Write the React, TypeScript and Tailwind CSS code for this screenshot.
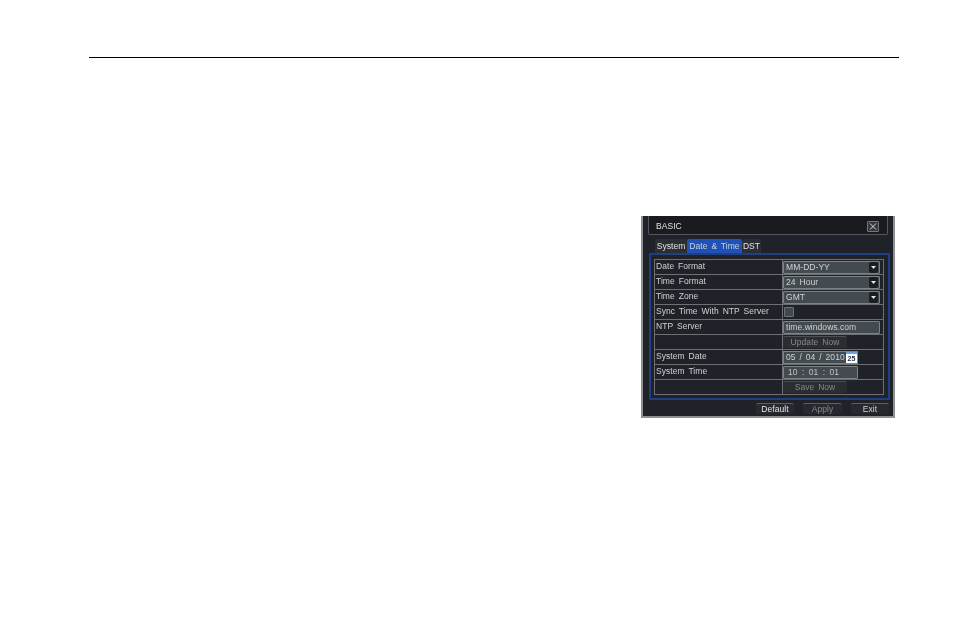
const rows = [
  { label: "Date Format", kind: "select", value: "MM-DD-YY" },
  { label: "Time Format", kind: "select", value: "24 Hour" },
  { label: "Time Zone", kind: "select", value: "GMT" },
  { label: "Sync Time With NTP Server", kind: "check", value: "" },
  { label: "NTP Server", kind: "input", value: "time.windows.com" },
  { label: "", kind: "button", value: "Update Now" },
  { label: "System Date", kind: "date", value: "05 / 04 / 2010" },
  { label: "System Time", kind: "time", value: "10 : 01 : 01" },
  { label: "", kind: "button", value: "Save Now" },
];

function Field({ kind, value }: { kind: string; value: string }) {
  if (kind === "select") {
    return (
      <div className="flex h-[13px] w-[97px] items-center justify-between rounded-[1px] border border-[#7c8286] bg-[#434b50] pl-[2px] pr-px text-[#cfd2d2]">
        <span>{value}</span>
        <span className="flex h-[11px] w-[9px] items-center justify-center rounded-[2px] bg-[#1b1d21]">
          <svg width="5" height="3" viewBox="0 0 5 3">
            <path d="M0 0h5L2.5 3z" fill="#e8e8e8" />
          </svg>
        </span>
      </div>
    );
  }
  if (kind === "check") {
    return <div className="ml-[1px] h-[10px] w-[10px] rounded-[1px] border border-[#6d7376] bg-[#41474c]" />;
  }
  if (kind === "input") {
    return (
      <div className="flex h-[13px] w-[97px] items-center rounded-[1px] border border-[#7c8286] bg-[#434b50] pl-[2px] text-[#cfd2d2]">
        {value}
      </div>
    );
  }
  if (kind === "button") {
    return (
      <div className="flex h-[12px] w-[64px] items-center justify-center rounded-[2px] border-t border-[#4c5054] bg-[#2a2d31] text-[#85898b]">
        {value}
      </div>
    );
  }
  if (kind === "date") {
    return (
      <div className="flex h-[13px] w-[75px] items-center justify-between whitespace-nowrap border border-[#7c8286] bg-[#434b50] pl-[2px] text-[#cfd2d2]">
        <span>{value}</span>
        <span className="flex h-[11px] w-[11px] flex-col bg-white">
          <span className="h-[2px] bg-[#6aa2e0]" />
          <span className="text-center text-[7px] font-bold leading-[9px] tracking-normal text-[#1c2a48]">25</span>
        </span>
      </div>
    );
  }
  return (
    <div className="flex h-[13px] w-[75px] items-center rounded-[1px] border border-[#7c8286] bg-[#434b50] pl-[4px] text-[#c0c3c3] [word-spacing:2px]">
      {value}
    </div>
  );
}

function FooterButton({ label, active, width }: { label: string; active?: boolean; width: string }) {
  return (
    <div
      className={`flex h-[11px] items-center justify-center rounded-[2px] border-t border-[#5c6064] bg-[#26292d] ${width} ${
        active ? "text-[#e6e6e6]" : label === "Apply" ? "text-[#85898b]" : "text-[#d0d0d0]"
      }`}
    >
      {label}
    </div>
  );
}

export default function App() {
  return (
    <div className="h-[636px] w-[955px] overflow-hidden bg-white pt-[57px] font-['Liberation_Sans',sans-serif]">
      <div className="ml-[89px] h-px w-[810px] bg-black" />
      <div className="ml-[641px] mt-[158px] h-[202px] w-[254px] border-x-2 border-b-2 border-[#8c9092] bg-[#1f2228] text-[8.5px] leading-none tracking-[0.05px] blur-[0.3px] [word-spacing:1.5px]">
        <div className="mx-[5px] flex h-[19px] items-center justify-between rounded-b-[2px] border-x border-b border-[#54585e] bg-[#191b1f] pl-[7px] pr-[8px] pt-[3px] text-[#e2e2e2]">
          <span>BASIC</span>
          <span className="flex h-[11px] w-[12px] items-center justify-center rounded-[1px] border border-[#73777a] bg-[#34373c]">
            <svg width="8" height="7" viewBox="0 0 8 7">
              <path d="M1 0.5L7 6.5M7 0.5L1 6.5" stroke="#d8d8d8" strokeWidth="1" />
            </svg>
          </span>
        </div>
        <div className="ml-[12px] mt-[4px] flex h-[14px] items-stretch">
          <div className="flex w-[32px] items-center justify-center rounded-t-[3px] bg-[#2b2e33] text-[#e2e2e2]">System</div>
          <div className="flex w-[55px] items-center justify-center rounded-t-[2px] bg-[#1f52b4] text-[#c4d0e4]">Date &amp; Time</div>
          <div className="flex w-[19px] items-center justify-center rounded-t-[3px] bg-[#2b2e33] text-[#e2e2e2]">DST</div>
        </div>
        <div className="ml-[6px] h-[147px] w-[241px] rounded-[1px] border-2 border-[#203f82] px-[3px] py-[4px]">
          <div className="w-[230px] border border-b-0 border-[#6c7073]">
            {rows.map((row, i) => (
              <div key={i} className="grid h-[15px] grid-cols-[127px_1fr] border-b border-[#6c7073]">
                <div className="flex items-center pb-[2px] pl-px text-[#d0d3d3]">{row.label}</div>
                <div className="flex items-center border-l border-[#6c7073]">
                  <Field kind={row.kind} value={row.value} />
                </div>
              </div>
            ))}
          </div>
        </div>
        <div className="mt-[3px] flex justify-end gap-[9px] pr-[4px]">
          <FooterButton label="Default" active width="w-[38px]" />
          <FooterButton label="Apply" width="w-[39px]" />
          <FooterButton label="Exit" width="w-[38px]" />
        </div>
      </div>
    </div>
  );
}
